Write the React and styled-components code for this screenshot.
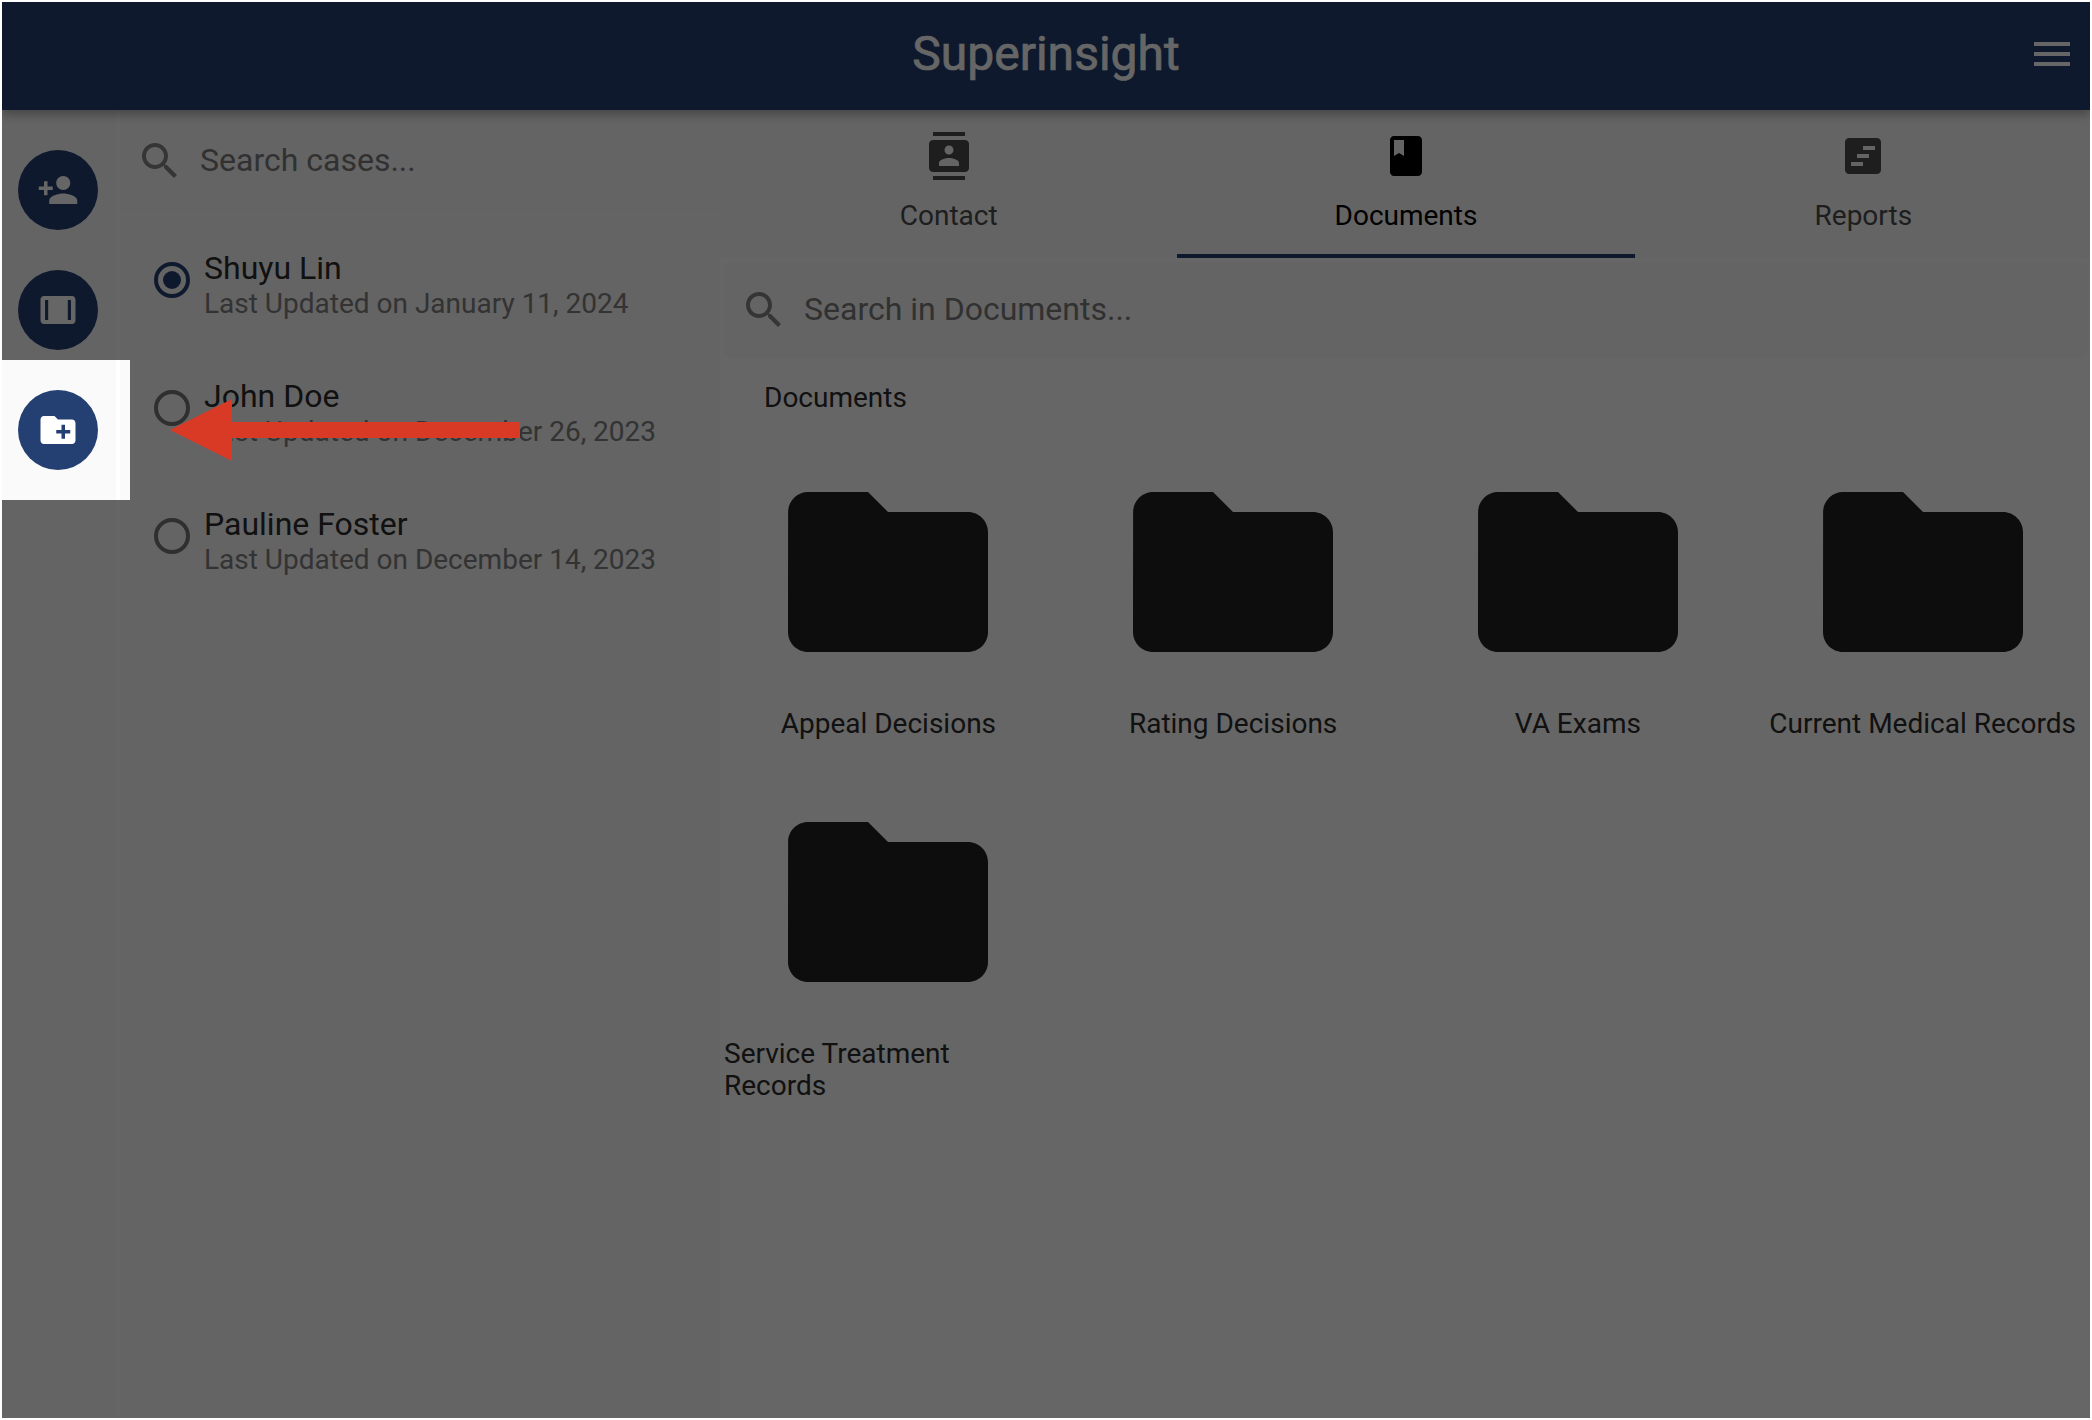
import React from 'react';
import styled, { createGlobalStyle } from 'styled-components';

const GlobalStyle = createGlobalStyle`
  * { box-sizing: border-box; }
  body { margin: 0; background: #fff; font-family: Roboto, "Liberation Sans", sans-serif; color: #222; }
`;

const Frame = styled.div`
  width: 2092px;
  height: 1420px;
  padding: 2px;
  background: #fff;
`;

const Window = styled.div`
  position: relative;
  display: flex;
  flex-direction: column;
  height: 100%;
  overflow: hidden;
  background: #fafafa;
`;

const AppBar = styled.header`
  position: relative;
  z-index: 1;
  display: grid;
  grid-template-columns: 80px 1fr 80px;
  align-items: center;
  flex: none;
  height: 108px;
  padding-bottom: 4px;
  background: #243f72;
  color: #fff;
  box-shadow: 0 4px 8px rgba(0, 0, 0, 0.16), 0 6px 10px rgba(0, 0, 0, 0.1), 0 2px 16px rgba(0, 0, 0, 0.08);
`;

const Title = styled.h1`
  grid-column: 2;
  margin: 0;
  text-align: center;
  font-size: 48px;
  font-weight: 400;
  line-height: 54px;
  -webkit-text-stroke: 0.7px currentColor;
`;

const MenuButton = styled.button`
  display: flex;
  justify-content: center;
  padding: 0 0 0 3px;
  border: 0;
  background: none;
  color: inherit;
`;

const Body = styled.div`
  display: flex;
  flex: 1;
  min-height: 0;
`;

const Rail = styled.nav`
  display: flex;
  flex: none;
  flex-direction: column;
  gap: 40px;
  width: 118px;
  padding: 40px 0 0 16px;
  border-right: 4px solid #fff;
`;

const RailButton = styled.button`
  display: flex;
  align-items: center;
  justify-content: center;
  width: 80px;
  height: 80px;
  padding: 0;
  border: 0;
  border-radius: 50%;
  background: #243f72;
  color: #fff;
`;

const CasesPanel = styled.aside`
  display: flex;
  flex: none;
  flex-direction: column;
  width: 600px;
`;

const SearchBar = styled.div`
  display: flex;
  align-items: center;
  gap: 16px;
  height: ${(p) => p.$height}px;
  margin: ${(p) => p.$margin || 0};
  padding: 0 16px;
  border-bottom: ${(p) => (p.$divided ? '4px solid #fdfdfd' : '0')};
  border-radius: ${(p) => p.$radius || 0}px;
  background: ${(p) => p.$background || 'transparent'};
  color: #7a7a7a;
`;

const Placeholder = styled.span`
  padding-bottom: 2px;
  font-size: 32px;
  line-height: 38px;
`;

const CaseList = styled.ul`
  display: flex;
  flex-direction: column;
  margin: 0;
  padding: 0;
  list-style: none;
`;

const CaseItem = styled.li`
  display: flex;
  gap: 14px;
  height: 128px;
  padding: 33px 0 0 34px;
`;

const Radio = styled.span`
  display: grid;
  place-items: center;
  flex: none;
  width: 36px;
  height: 36px;
  margin-top: 13px;
  border: 4px solid ${(p) => (p.$checked ? '#243f72' : '#757575')};
  border-radius: 50%;

  &::after {
    content: '';
    width: 18px;
    height: 18px;
    border-radius: 50%;
    background: ${(p) => (p.$checked ? '#243f72' : 'transparent')};
  }
`;

const CaseText = styled.div`
  display: flex;
  flex-direction: column;
`;

const CaseName = styled.span`
  color: #2b2b2b;
  font-size: 32px;
  line-height: 38px;
`;

const CaseMeta = styled.span`
  color: #808080;
  font-size: 28px;
  line-height: 34px;
`;

const Main = styled.main`
  flex: none;
  width: 1372px;
  background: #fff;
`;

const Tabs = styled.div`
  display: grid;
  grid-template-columns: repeat(3, 1fr);
  height: 148px;
  background: #fafafa;
`;

const Tab = styled.button`
  display: flex;
  flex-direction: column;
  align-items: center;
  gap: 19px;
  padding: 22px 0 0;
  border: 0;
  border-bottom: 4px solid ${(p) => (p.$active ? '#243f72' : 'transparent')};
  background: none;
  color: ${(p) => (p.$active ? '#000' : '#4d4d4d')};
  font-family: inherit;
  font-size: 28px;
  line-height: 34px;
`;

const Heading = styled.h2`
  margin: 0;
  padding: 23px 0 0 44px;
  color: #2b2b2b;
  font-size: 28px;
  font-weight: 400;
  line-height: 34px;
`;

const FolderGrid = styled.div`
  display: grid;
  grid-template-columns: repeat(4, 1fr);
  column-gap: 16px;
  padding: 37px 5px 0 4px;
`;

const FolderCard = styled.div`
  display: flex;
  flex-direction: column;
  align-items: center;
  height: 330px;
`;

const FolderLabel = styled.span`
  margin-top: 16px;
  max-width: 100%;
  color: #2b2b2b;
  font-size: 28px;
  line-height: 32px;
`;

const Spotlight = styled.div`
  position: absolute;
  z-index: 2;
  left: 0;
  top: 358px;
  width: 128px;
  height: 140px;
  box-shadow: 0 0 0 3000px rgba(0, 0, 0, 0.6);
`;

const ArrowMark = styled.svg`
  position: absolute;
  z-index: 3;
  left: 168px;
  top: 397px;
`;

const Glyph = styled.svg`
  display: block;
  flex: none;
  fill: ${(p) => p.$fill || 'currentColor'};
`;

const PATHS = {
  menu: 'M3 18h18v-2H3v2zm0-5h18v-2H3v2zm0-7v2h18V6H3z',
  personAdd:
    'M15 12c2.21 0 4-1.79 4-4s-1.79-4-4-4-4 1.79-4 4 1.79 4 4 4zm-9-2V7H4v3H1v2h3v3h2v-3h3v-2H6zm9 4c-2.67 0-8 1.34-8 4v2h16v-2c0-2.66-5.33-4-8-4z',
  array:
    'M20 4H4c-1.1 0-2 .9-2 2v12c0 1.1.9 2 2 2h16c1.1 0 2-.9 2-2V6c0-1.1-.9-2-2-2zM6.4 17.7H4.6V6.3h1.8v11.4zm13 0h-1.8V6.3h1.8v11.4z',
  newFolder:
    'M20 6h-8l-2-2H4c-1.11 0-1.99.89-1.99 2L2 18c0 1.11.89 2 2 2h16c1.11 0 2-.89 2-2V8c0-1.11-.89-2-2-2zm-1 8h-3v3h-2v-3h-3v-2h3V9h2v3h3v2z',
  search:
    'M15.5 14h-.79l-.28-.27C15.41 12.59 16 11.11 16 9.5 16 5.91 13.09 3 9.5 3S3 5.91 3 9.5 5.91 16 9.5 16c1.61 0 3.09-.59 4.23-1.57l.27.28v.79l5 4.99L20.49 19l-4.99-5zm-6 0C7.01 14 5 11.99 5 9.5S7.01 5 9.5 5 14 7.01 14 9.5 11.99 14 9.5 14z',
  contacts:
    'M20 0H4v2h16V0zM4 24h16v-2H4v2zM20 4H4c-1.1 0-2 .9-2 2v12c0 1.1.9 2 2 2h16c1.1 0 2-.9 2-2V6c0-1.1-.9-2-2-2zm-8 2.75c1.24 0 2.25 1.01 2.25 2.25s-1.01 2.25-2.25 2.25S9.75 10.24 9.75 9 10.76 6.75 12 6.75zM17 17H7v-1.5c0-1.67 3.33-2.5 5-2.5s5 .83 5 2.5V17z',
  book: 'M18 2H6c-1.1 0-2 .9-2 2v16c0 1.1.9 2 2 2h12c1.1 0 2-.9 2-2V4c0-1.1-.9-2-2-2zM6 4h5v8l-2.5-1.5L6 12V4z',
  timeline:
    'M19 3H5c-1.1 0-2 .9-2 2v14c0 1.1.9 2 2 2h14c1.1 0 2-.9 2-2V5c0-1.1-.9-2-2-2zm-7 14H6v-2h6v2zm3-4H9v-2h6v2zm3-4h-6V7h6v2z',
  folder: 'M10 4H4c-1.1 0-1.99.9-1.99 2L2 18c0 1.1.9 2 2 2h16c1.1 0 2-.9 2-2V8c0-1.1-.9-2-2-2h-8l-2-2z',
};

const Icon = ({ name, size, fill }) => (
  <Glyph viewBox="0 0 24 24" width={size} height={size} $fill={fill} aria-hidden="true">
    <path d={PATHS[name]} />
  </Glyph>
);

const RAIL = ['personAdd', 'array', 'newFolder'];

const CASES = [
  { name: 'Shuyu Lin', updated: 'January 11, 2024', checked: true },
  { name: 'John Doe', updated: 'December 26, 2023' },
  { name: 'Pauline Foster', updated: 'December 14, 2023' },
];

const TABS = [
  { label: 'Contact', icon: 'contacts' },
  { label: 'Documents', icon: 'book', active: true },
  { label: 'Reports', icon: 'timeline' },
];

const FOLDERS = [
  'Appeal Decisions',
  'Rating Decisions',
  'VA Exams',
  'Current Medical Records',
  'Service Treatment Records',
];

export default function App() {
  return (
    <>
      <GlobalStyle />
      <Frame>
        <Window>
          <AppBar>
            <Title>Superinsight</Title>
            <MenuButton aria-label="Menu">
              <Icon name="menu" size={48} />
            </MenuButton>
          </AppBar>
          <Body>
            <Rail>
              {RAIL.map((name) => (
                <RailButton key={name} aria-label={name}>
                  <Icon name={name} size={42} />
                </RailButton>
              ))}
            </Rail>
            <CasesPanel>
              <SearchBar $height={106} $divided>
                <Icon name="search" size={48} fill="#868686" />
                <Placeholder>Search cases...</Placeholder>
              </SearchBar>
              <CaseList>
                {CASES.map((item) => (
                  <CaseItem key={item.name}>
                    <Radio $checked={item.checked} />
                    <CaseText>
                      <CaseName>{item.name}</CaseName>
                      <CaseMeta>Last Updated on {item.updated}</CaseMeta>
                    </CaseText>
                  </CaseItem>
                ))}
              </CaseList>
            </CasesPanel>
            <Main>
              <Tabs>
                {TABS.map((tab) => (
                  <Tab key={tab.label} $active={tab.active}>
                    <Icon name={tab.icon} size={48} />
                    <span>{tab.label}</span>
                  </Tab>
                ))}
              </Tabs>
              <SearchBar $height={96} $margin="4px 4px 0" $radius={8} $background="#fafafa">
                <Icon name="search" size={48} fill="#868686" />
                <Placeholder>Search in Documents...</Placeholder>
              </SearchBar>
              <Heading>Documents</Heading>
              <FolderGrid>
                {FOLDERS.map((label) => (
                  <FolderCard key={label}>
                    <Icon name="folder" size={240} />
                    <FolderLabel>{label}</FolderLabel>
                  </FolderCard>
                ))}
              </FolderGrid>
            </Main>
          </Body>
          <Spotlight />
          <ArrowMark width="350" height="62" viewBox="0 0 350 62">
            <path d="M0 31L62 0V23H350V39H62V62Z" fill="#d93a26" />
          </ArrowMark>
        </Window>
      </Frame>
    </>
  );
}
